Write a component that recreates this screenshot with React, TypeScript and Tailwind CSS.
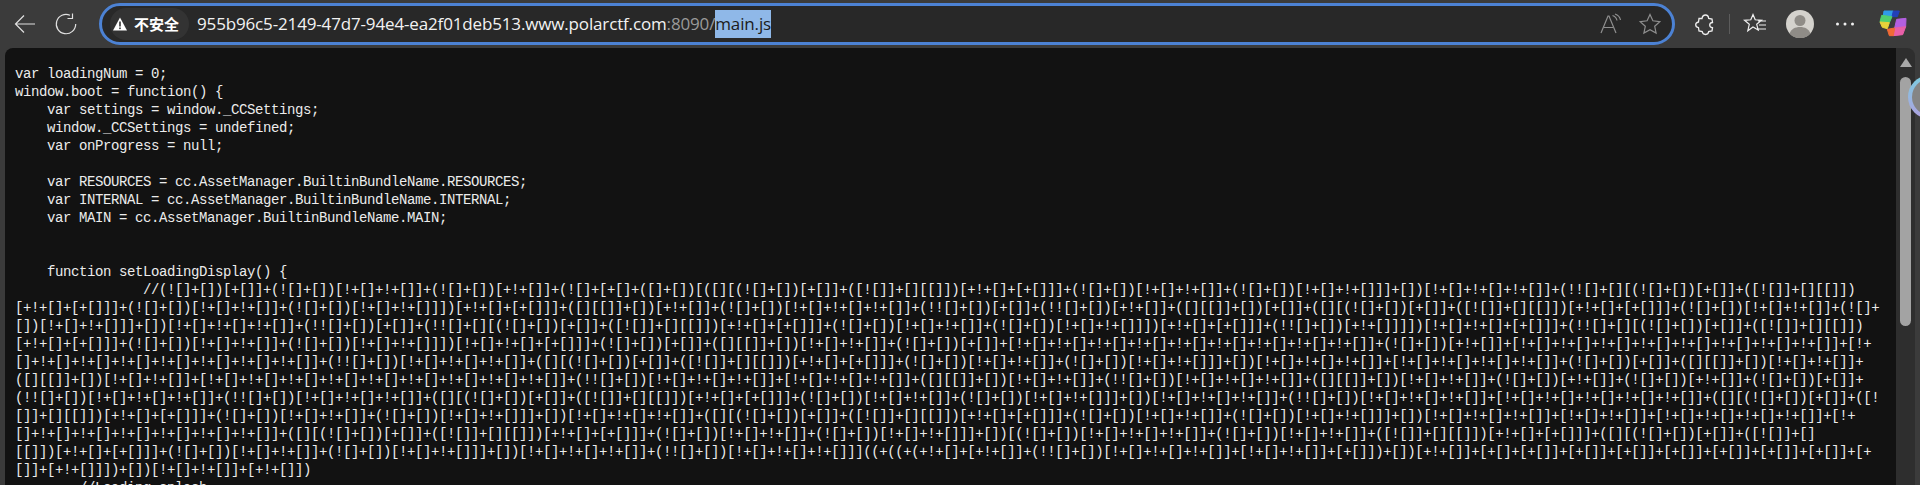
const rows = [
  "                //(![]+[])[+[]]+(![]+[])[!+[]+!+[]]+(![]+[])[+!+[]]+(![]+[+[]+([]+[])[([][(![]+[])[+[]]+([![]]+[][[]])[+!+[]+[+[]]]+(![]+[])[!+[]+!+[]]+(![]+[])[!+[]+!+[]]]+[])[!+[]+!+[]+!+[]]+(!![]+[][(![]+[])[+[]]+([![]]+[][[]])",
  "[+!+[]+[+[]]]+(![]+[])[!+[]+!+[]]+(![]+[])[!+[]+!+[]]])[+!+[]+[+[]]]+([][[]]+[])[+!+[]]+(![]+[])[!+[]+!+[]+!+[]]+(!![]+[])[+[]]+(!![]+[])[+!+[]]+([][[]]+[])[+[]]+([][(![]+[])[+[]]+([![]]+[][[]])[+!+[]+[+[]]]+(![]+[])[!+[]+!+[]]+(![]+",
  "[])[!+[]+!+[]]]+[])[!+[]+!+[]+!+[]]+(!![]+[])[+[]]+(!![]+[][(![]+[])[+[]]+([![]]+[][[]])[+!+[]+[+[]]]+(![]+[])[!+[]+!+[]]+(![]+[])[!+[]+!+[]]])[+!+[]+[+[]]]+(!![]+[])[+!+[]]]])[!+[]+!+[]+[+[]]]+(!![]+[][(![]+[])[+[]]+([![]]+[][[]])",
  "[+!+[]+[+[]]]+(![]+[])[!+[]+!+[]]+(![]+[])[!+[]+!+[]]])[!+[]+!+[]+[+[]]]+(![]+[])[+[]]+([][[]]+[])[!+[]+!+[]]+(![]+[])[+[]]+[!+[]+!+[]+!+[]+!+[]+!+[]+!+[]+!+[]+!+[]+!+[]]+(![]+[])[+!+[]]+[!+[]+!+[]+!+[]+!+[]+!+[]+!+[]+!+[]+!+[]]+[!+",
  "[]+!+[]+!+[]+!+[]+!+[]+!+[]+!+[]+!+[]]+(!![]+[])[!+[]+!+[]+!+[]]+([][(![]+[])[+[]]+([![]]+[][[]])[+!+[]+[+[]]]+(![]+[])[!+[]+!+[]]+(![]+[])[!+[]+!+[]]]+[])[!+[]+!+[]+!+[]]+[!+[]+!+[]+!+[]+!+[]]+(![]+[])[+[]]+([][[]]+[])[!+[]+!+[]]+",
  "([][[]]+[])[!+[]+!+[]]+[!+[]+!+[]+!+[]+!+[]+!+[]+!+[]+!+[]+!+[]+!+[]]+(!![]+[])[!+[]+!+[]+!+[]]+[!+[]+!+[]+!+[]]+([][[]]+[])[!+[]+!+[]]+(!![]+[])[!+[]+!+[]+!+[]]+([][[]]+[])[!+[]+!+[]]+(![]+[])[+!+[]]+(![]+[])[+!+[]]+(![]+[])[+[]]+",
  "(!![]+[])[!+[]+!+[]+!+[]]+(!![]+[])[!+[]+!+[]+!+[]]+([][(![]+[])[+[]]+([![]]+[][[]])[+!+[]+[+[]]]+(![]+[])[!+[]+!+[]]+(![]+[])[!+[]+!+[]]]+[])[!+[]+!+[]+!+[]]+(!![]+[])[!+[]+!+[]+!+[]]+[!+[]+!+[]+!+[]+!+[]+!+[]]+([][(![]+[])[+[]]+([!",
  "[]]+[][[]])[+!+[]+[+[]]]+(![]+[])[!+[]+!+[]]+(![]+[])[!+[]+!+[]]]+[])[!+[]+!+[]+!+[]]+([][(![]+[])[+[]]+([![]]+[][[]])[+!+[]+[+[]]]+(![]+[])[!+[]+!+[]]+(![]+[])[!+[]+!+[]]]+[])[!+[]+!+[]+!+[]]+[!+[]+!+[]]+[!+[]+!+[]+!+[]+!+[]]+[!+",
  "[]+!+[]+!+[]+!+[]+!+[]+!+[]+!+[]]+([][(![]+[])[+[]]+([![]]+[][[]])[+!+[]+[+[]]]+(![]+[])[!+[]+!+[]]+(![]+[])[!+[]+!+[]]]+[])[(![]+[])[!+[]+!+[]+!+[]]+(![]+[])[!+[]+!+[]]+([![]]+[][[]])[+!+[]+[+[]]]+([][(![]+[])[+[]]+([![]]+[]",
  "[[]])[+!+[]+[+[]]]+(![]+[])[!+[]+!+[]]+(![]+[])[!+[]+!+[]]]+[])[!+[]+!+[]+!+[]]+(!![]+[])[!+[]+!+[]+!+[]]]((+((+(+!+[]+[+!+[]]+(!![]+[])[!+[]+!+[]+!+[]]+[!+[]+!+[]]+[+[]])+[])[+!+[]]+[+[]+[+[]]+[+[]]+[+[]]+[+[]]+[+[]]+[+[]]+[+[]]+[+",
  "[]]+[+!+[]]])+[])[!+[]+!+[]]+[+!+[]])",
];

const code = [
  "var loadingNum = 0;",
  "window.boot = function() {",
  "    var settings = window._CCSettings;",
  "    window._CCSettings = undefined;",
  "    var onProgress = null;",
  "",
  "    var RESOURCES = cc.AssetManager.BuiltinBundleName.RESOURCES;",
  "    var INTERNAL = cc.AssetManager.BuiltinBundleName.INTERNAL;",
  "    var MAIN = cc.AssetManager.BuiltinBundleName.MAIN;",
  "",
  "",
  "    function setLoadingDisplay() {",
  ...rows,
  "        //Loading splash",
];

export default function App() {
  return (
    <div className="relative flex h-[485px] w-[1920px] flex-col overflow-hidden bg-[#3b3b3b]">
      <header className="flex h-12 shrink-0 items-center pl-[13px]">
        <svg width="24" height="24" viewBox="0 0 24 24" fill="none" stroke="#e0e0e0" strokeWidth="1.2" className="mr-[17px]">
          <path d="M22 12H2.500M11 3.500 2.500 12l8.500 8.500" />
        </svg>
        <svg width="24" height="24" viewBox="0 0 24 24" fill="none" stroke="#e0e0e0" strokeWidth="1.2" className="mr-[21px]">
          <path d="M16 3.200A9.700 9.700 0 1 0 21.700 12M18.500 1.500v5h-5" />
        </svg>
        <div className="flex h-[42px] w-[1576px] items-center rounded-[21px] border-[3px] border-[#4c82d4] bg-[#282828] pl-2 pr-[10px]">
          <div className="mr-2 flex h-8 w-[79px] items-center gap-[6px] rounded-2xl bg-[#333333] pl-0.5">
            <svg width="16" height="16" viewBox="0 0 16 16" fill="#fff">
              <path d="M8 1.500 15 14.500H1Z" />
              <rect x="7.200" y="5.500" width="1.600" height="5" fill="#333333" />
              <rect x="7.200" y="11.500" width="1.600" height="1.600" fill="#333333" />
            </svg>
            <span className="font-['Noto_Sans_CJK_SC',sans-serif] text-[15px] font-bold text-white">不安全</span>
          </div>
          <div className="flex-1 whitespace-pre font-['Open_Sans',sans-serif] text-[17px] leading-7 tracking-[-0.15px] text-[#f2f2f2]">
            955b96c5-2149-47d7-94e4-ea2f01deb513.www.polarctf.com<span className="text-[#9a9a9a]">:8090/</span>
            <span className="inline-block h-7 bg-[#8fb8e8] text-[#1c1c1c]">main.js</span>
          </div>
          <svg width="24" height="24" viewBox="0 0 24 24" fill="none" stroke="#8f8f8f" strokeWidth="1.2" className="mr-4">
            <path d="M3 21 10 4h1l7 17M6 15.500h9M14.500 3.500c2.500.8 4 2.600 4.500 5M17 2c3 1 5 3.300 5.500 6" />
          </svg>
          <svg width="24" height="24" viewBox="0 0 24 24" fill="none" stroke="#8f8f8f" strokeWidth="1.2">
            <path d="m12 2.500 2.900 6.300 6.900.8-5.100 4.700 1.400 6.800-6.100-3.400-6.100 3.400 1.400-6.800-5.100-4.700 6.900-.8Z" />
          </svg>
        </div>
        <svg width="24" height="24" viewBox="0 0 24 24" fill="none" stroke="#efefef" strokeWidth="1.300" className="ml-[18px]">
          <path d="M9 6.500c.3-2 1.500-3.500 3.500-3.500s3 1.500 3.200 3.500l3.300.5.500 3.500c-1.800.2-2.800 1.200-2.800 2.500s1 2.500 2.800 2.700l-.5 3.300-3.300.5c-.2 2-1.400 3-3.200 3s-3-1-3.300-3l-3.200-.5-.5-3.300c-1.800-.3-2.800-1.500-2.800-2.900s1-2.500 2.800-2.800l.5-3.500Z" />
        </svg>
        <div className="ml-3 h-5 w-px bg-[#5c5c5c]" />
        <svg width="24" height="24" viewBox="0 0 24 24" fill="none" stroke="#f0f0f0" strokeWidth="1.200" className="ml-[13px]">
          <path d="m10 2.500 2.200 5.300 6.300.5-4.800 4 1.500 5.700-5.200-3.100-5.200 3.800 1.500-6.400-4.800-4 6.300-.5ZM15 9h8M16 13h7M15 17h8" />
        </svg>
        <svg width="28" height="28" viewBox="0 0 28 28" className="ml-[19px]">
          <circle cx="14" cy="14" r="14" fill="#d4d2cd" />
          <circle cx="14" cy="10.500" r="5.500" fill="#8f8c87" />
          <path d="M3.500 23.500c1.800-4.500 5.500-6.500 10.500-6.500s8.700 2 10.500 6.500A14 14 0 0 1 3.500 23.500Z" fill="#8f8c87" />
        </svg>
        <svg width="24" height="24" viewBox="0 0 24 24" fill="#f0f0f0" className="ml-[19px]">
          <circle cx="4.500" cy="12" r="1.500" />
          <circle cx="12" cy="12" r="1.500" />
          <circle cx="19.500" cy="12" r="1.500" />
        </svg>
        <svg width="30" height="30" viewBox="54 27 90 90" strokeWidth="3" strokeLinejoin="round" className="ml-[21px]">
          <polygon points="72,33 100,33 96,50 70,46" fill="#2f9be8" stroke="#2f9be8" />
          <polygon points="100,33 118,33 112,50 96,50" fill="#2340b8" stroke="#2340b8" />
          <polygon points="65,46 96,50 88,68 60,66" fill="#4fcf6f" stroke="#4fcf6f" />
          <polygon points="60,66 88,68 82,86 67,82" fill="#e8d23a" stroke="#e8d23a" />
          <polygon points="110,58 138,55 137,80 104,84" fill="#b35fe0" stroke="#b35fe0" />
          <polygon points="104,84 137,80 128,104 100,107" fill="#e85fa8" stroke="#e85fa8" />
          <polygon points="82,88 104,84 100,107 88,107" fill="#f06a35" stroke="#f06a35" />
        </svg>
      </header>
      <div className="flex min-h-0 flex-1 pl-[5px]">
        <main className="min-w-0 flex-1 overflow-hidden rounded-tl-lg bg-[#121212] pl-2.5 pt-[17px]">
          <pre className="font-['Liberation_Mono',monospace] text-[14px] leading-[18px] tracking-[-0.4px] text-[#ececec]">
            {code.join("\n")}
          </pre>
        </main>
        <aside className="w-[19px] shrink-0 overflow-hidden rounded-tr-lg bg-[#2e2e2e]">
          <div className="mx-auto mt-[10px] h-0 w-0 border-x-[6px] border-b-[9px] border-x-transparent border-b-[#a8a8a8]" />
          <div className="mx-auto mt-[10px] h-[249px] w-[11px] rounded-md bg-[#a3a3a3]" />
        </aside>
        <div className="w-[5px] shrink-0" />
      </div>
      <div className="absolute left-[1908px] top-[75px] size-11 rounded-full bg-[linear-gradient(180deg,#7ccde0,#b0a0e0)] p-1">
        <div className="size-full rounded-full bg-[#858585]" />
      </div>
    </div>
  );
}
